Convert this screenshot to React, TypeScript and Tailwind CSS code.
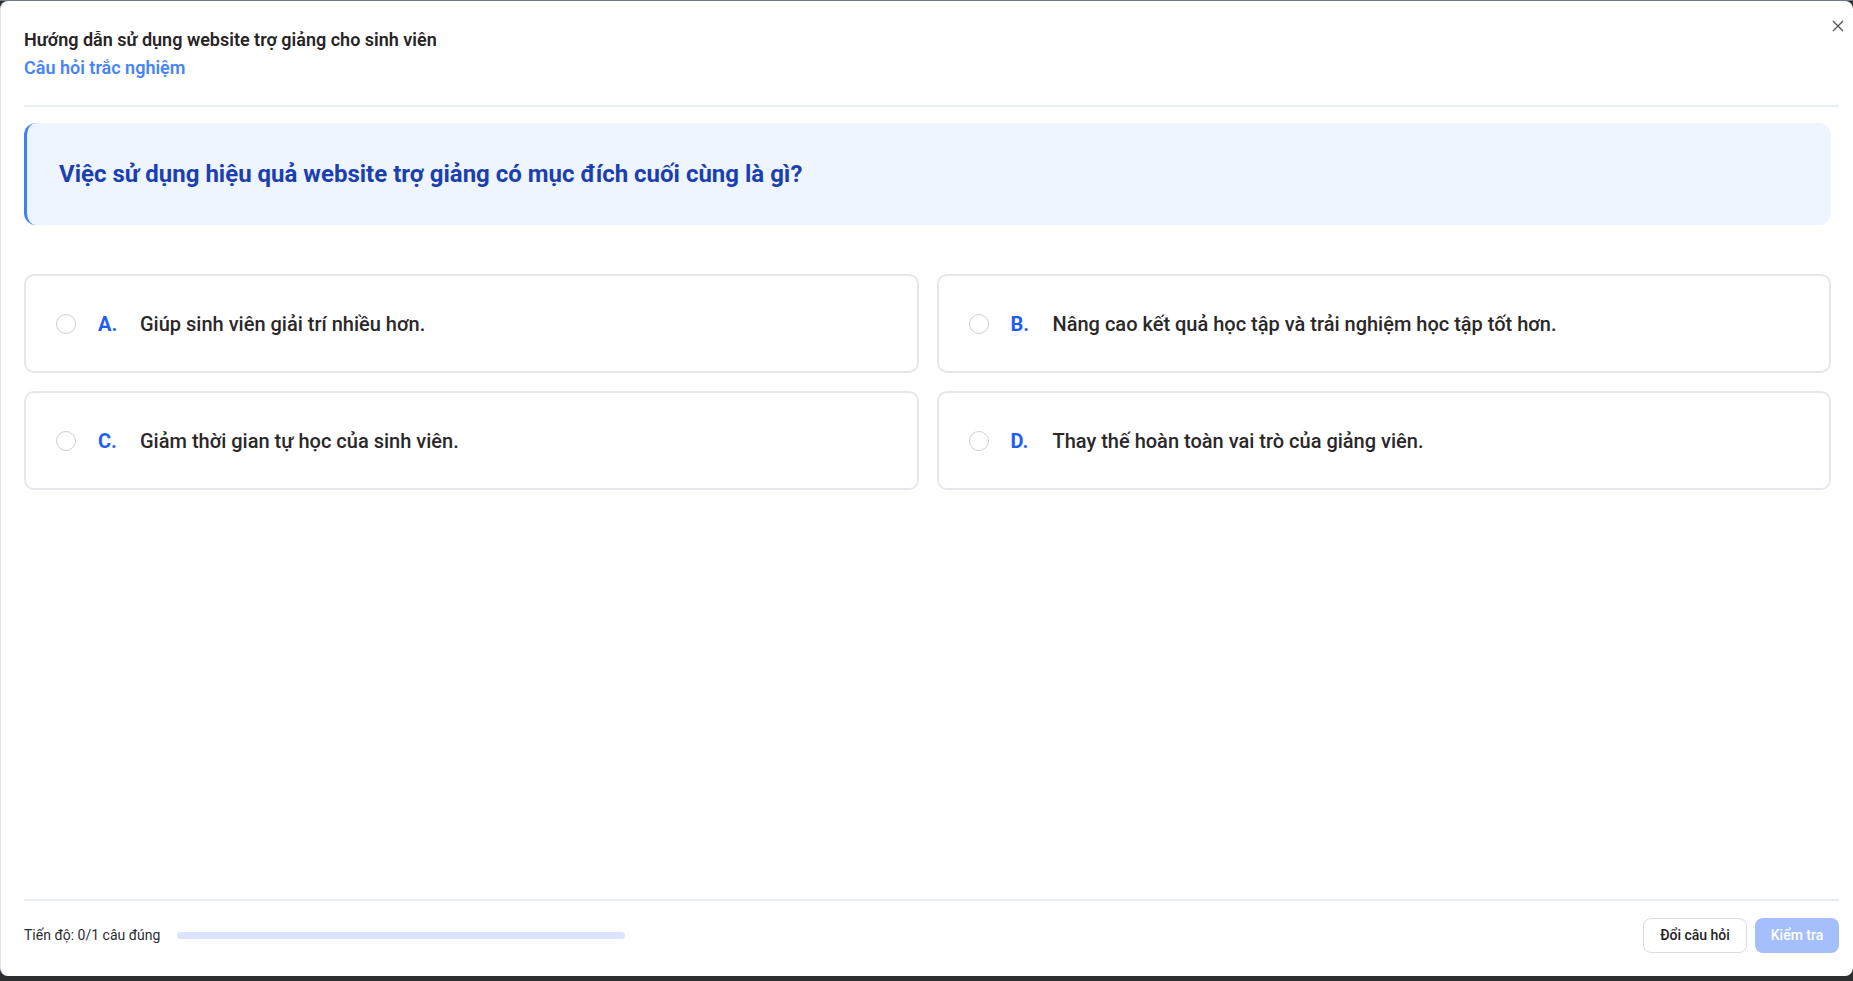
const options = [
  { key: "A", text: "Giúp sinh viên giải trí nhiều hơn." },
  { key: "B", text: "Nâng cao kết quả học tập và trải nghiệm học tập tốt hơn." },
  { key: "C", text: "Giảm thời gian tự học của sinh viên." },
  { key: "D", text: "Thay thế hoàn toàn vai trò của giảng viên." },
];

const OptionCard = ({ label, text }: { label: string; text: string }) => {
  return (
    <button className="flex h-[99px] items-center gap-[22px] rounded-[10px] border-2 border-[#e6e7eb] bg-white pl-[30px] text-left">
      <span className="h-5 w-5 shrink-0 rounded-full border-[1.5px] border-[#d3cfd0] bg-white" />
      <span className="flex items-center gap-[21px]">
        <span className="w-[21px] text-[20px] font-bold text-[#1f5ef5]">{label}.</span>
        <span className="text-[20px] font-medium text-[#2b2829]">{text}</span>
      </span>
    </button>
  );
};

export default function App() {
  return (
    <div
      className="h-[981px] w-full border-t border-[#6e7b8a] bg-[#2c2d30]"
      style={{ fontFamily: "Roboto, 'Noto Sans', sans-serif" }}
    >
      <div className="relative flex h-[975px] flex-col rounded-lg border-l border-[#dfe6ee] bg-white pl-[23px] pr-[14px]">
        <button className="absolute right-[9px] top-[19px] text-[#555]" aria-label="Đóng">
          <svg width="12" height="12" viewBox="0 0 12 12" fill="none" stroke="currentColor" strokeWidth="1.3">
            <path d="M1 1l10 10M11 1L1 11" />
          </svg>
        </button>

        <div className="border-b-2 border-[#e7eef8] pb-[25px] pt-[27px]">
          <h1 className="text-[18px] font-semibold leading-6 text-[#282425]">
            Hướng dẫn sử dụng website trợ giảng cho sinh viên
          </h1>
          <p className="mt-1 text-[18px] font-semibold leading-6 text-[#4784f6]">Câu hỏi trắc nghiệm</p>
        </div>

        <div className="mr-[8px]">
          <div className="mt-4 flex h-[102px] items-center rounded-xl border-l-[3px] border-[#3b82f6] bg-[#eef5ff] pl-[32px]">
            <h2 className="text-[24px] font-bold text-[#1c3fb0]">
              Việc sử dụng hiệu quả website trợ giảng có mục đích cuối cùng là gì?
            </h2>
          </div>

          <div className="mt-[49px] grid grid-cols-2 gap-[18px]">
            {options.map((o) => (
              <OptionCard key={o.key} label={o.key} text={o.text} />
            ))}
          </div>
        </div>

        <div className="flex-1" />

        <div className="flex items-center justify-between border-t-2 border-[#e7eef8] pb-[23px] pt-[17px]">
          <div className="flex items-center gap-[17px]">
            <span className="text-[14px] text-[#2b2d33]">Tiến độ: 0/1 câu đúng</span>
            <div className="h-[7px] w-[448px] rounded-full bg-[#dbe5fd]" />
          </div>
          <div className="flex items-center gap-2">
            <button className="h-[35px] w-[104px] rounded-lg border border-[#dadce2] bg-white text-[14px] font-medium text-[#222]">
              Đổi câu hỏi
            </button>
            <button className="h-[35px] w-[84px] rounded-lg bg-[#a4bffb] text-[14px] font-medium text-white">
              Kiểm tra
            </button>
          </div>
        </div>
      </div>
    </div>
  );
}
